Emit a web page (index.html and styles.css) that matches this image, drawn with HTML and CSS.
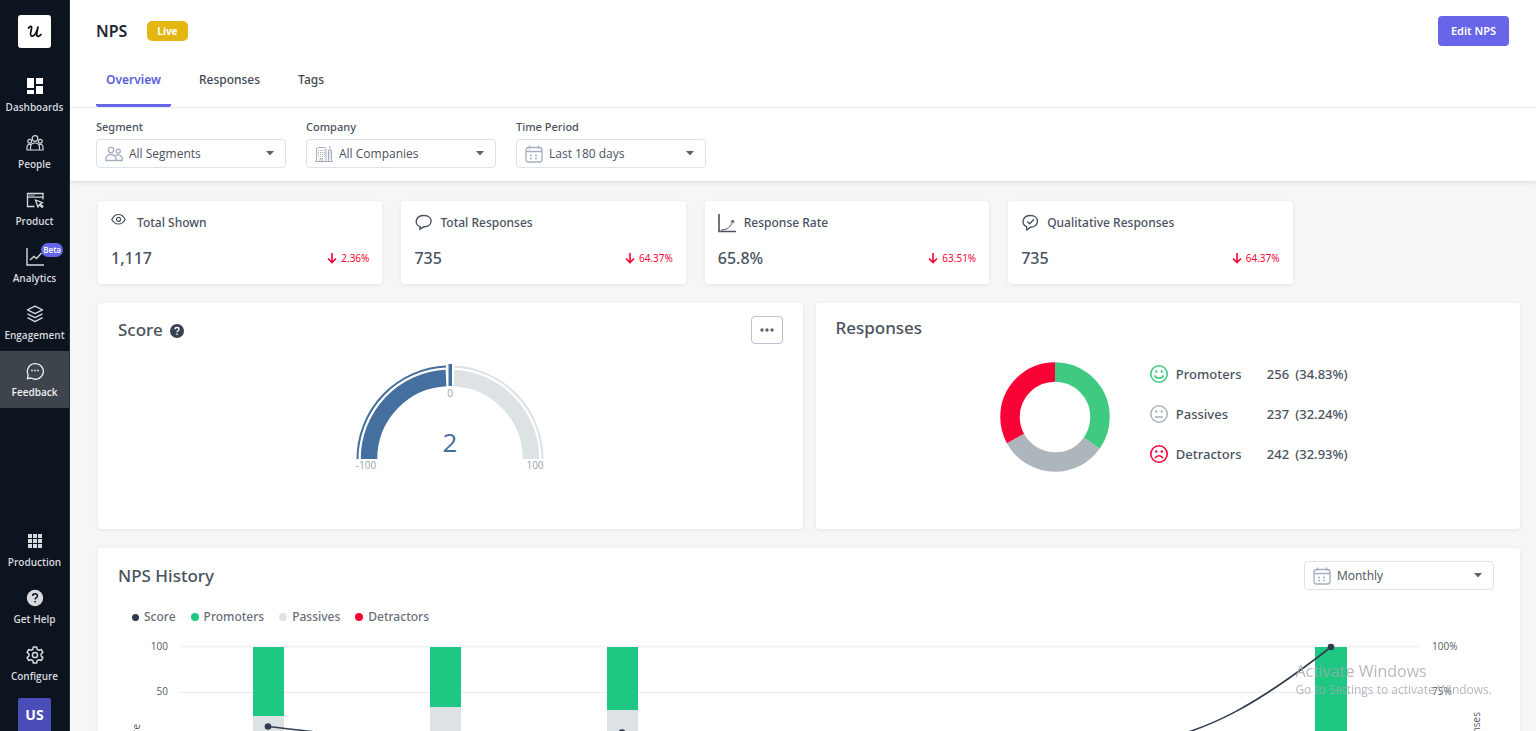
FILE: index.html
```
<!DOCTYPE html>
<html lang="en">
<head>
<meta charset="utf-8">
<title>NPS</title>
<meta name="viewport" content="width=device-width, initial-scale=1">
<link rel="stylesheet" href="styles.css">
</head>
<body>
<svg class="sprite" aria-hidden="true">
  <symbol id="calendar" viewBox="0 0 18 18"><g fill="none" stroke="currentColor" stroke-width="1.300"><rect x="1" y="2.500" width="16" height="14.500" rx="2.500"/><path d="M1 6.500h16M4.500 .5v3M13.500 .5v3"/><path d="M5 10.500h3M5 13.500h3M10 10.500h3M10 13.500h3" stroke-width="1.600" stroke-dasharray="2 1"/></g></symbol>
  <symbol id="caret" viewBox="0 0 8 5"><path d="M0 0h8L4 4.500z" fill="currentColor"/></symbol>
  <symbol id="down" viewBox="0 0 10 12"><path d="M5 1v9.500M1 6.500l4 4 4-4" fill="none" stroke="currentColor" stroke-width="1.600"/></symbol>
</svg>
<div class="app">
  <nav class="sidebar" aria-label="Main">
    <a class="logo" href="#" aria-label="Home"><svg viewBox="0 0 16 14" width="16" height="14"><path d="M1.500 3C3 1 5 .8 4.600 3L3.600 8c-.6 3.200 1.600 4 3.400 2.400C9 8.500 10.300 5 11.200 1.500 10.400 5 9.400 8.500 9.800 10.300c.4 1.700 2.400 1.300 4.200-.8" fill="none" stroke="#111" stroke-width="1.700" stroke-linecap="round"/></svg></a>
    <a class="nav-item" href="#"><svg viewBox="0 0 18 18"><path d="M1 1h7v10H1zM10 1h7v6h-7zM1 13h7v4H1zM10 9h7v8h-7z" fill="#fff"/></svg>Dashboards</a>
    <a class="nav-item" href="#"><svg viewBox="0 0 18 18"><g fill="none" stroke="currentColor" stroke-width="1.200"><circle cx="9" cy="4.500" r="2.800"/><circle cx="3.700" cy="7.200" r="1.900"/><circle cx="14.300" cy="7.200" r="1.900"/><path d="M4.500 16v-2.500c0-6 9-6 9 0V16zM4.500 16H1v-2.500c0-3 2.200-3.800 4.200-3.200M13.500 16H17v-2.500c0-3-2.200-3.800-4.200-3.200"/></g></svg>People</a>
    <a class="nav-item" href="#"><svg viewBox="0 0 18 18"><g fill="none" stroke="currentColor" stroke-width="1.300"><path d="M8.500 15.500H1.500v-13h15.500v6M1.500 6.200H17M3.500 4.400h1M5.500 4.400h1M7.500 4.400h1M9.500 9l2.400 7 1.400-2.200 2.600 2.600 1-1-2.600-2.600 2.200-1.200z"/></g></svg>Product</a>
    <a class="nav-item" href="#"><span class="badge">Beta</span><svg viewBox="0 0 18 18"><path d="M1 0v17h17" fill="none" stroke="currentColor" stroke-width="1.400"/><path d="M4 12l4-3.500 2.500 2L15.500 5" fill="none" stroke="currentColor" stroke-width="1.400"/></svg>Analytics</a>
    <a class="nav-item" href="#"><svg viewBox="0 0 18 18"><g fill="none" stroke="currentColor" stroke-width="1.300" stroke-linejoin="round"><path d="M9 1.200l7.500 3.700L9 8.600 1.500 4.900zM1.500 8.900L9 12.600l7.500-3.700M1.500 12.700L9 16.600l7.500-3.900"/></g></svg>Engagement</a>
    <a class="nav-item active" href="#" aria-current="page"><svg viewBox="0 0 18 18"><path d="M1.500 16.700l.6-4a8 7.800 0 1 1 3 3.300z" fill="none" stroke="currentColor" stroke-width="1.300"/><path d="M5.200 8.500h1.600M8.200 8.500h1.600M11.200 8.500h1.600" stroke="currentColor" stroke-width="1.500"/></svg>Feedback</a>
    <div class="nav-bottom">
      <a class="nav-item" href="#"><svg viewBox="0 0 18 18"><path d="M2 2h4v4H2zM7 2h4v4H7zM12 2h4v4h-4zM2 7h4v4H2zM7 7h4v4H7zM12 7h4v4h-4zM2 12h4v4H2zM7 12h4v4H7zM12 12h4v4h-4z" fill="currentColor"/><path d="M6.500 1v16M11.500 1v16M1 6.500h16M1 11.500h16" stroke="#0c1420"/></svg>Production</a>
      <a class="nav-item" href="#"><svg viewBox="0 0 18 18"><circle cx="9" cy="9" r="8.200" fill="currentColor"/><path d="M6.600 7c0-3 4.900-3 4.900 0 0 1.700-2.400 1.600-2.400 3.500M9.100 12v1.600" fill="none" stroke="#0c1420" stroke-width="1.500"/></svg>Get Help</a>
      <a class="nav-item" href="#"><svg viewBox="0 0 18 18"><g fill="none" stroke="currentColor" stroke-width="1.500" stroke-linejoin="round"><circle cx="9" cy="9" r="2.600"/><path d="M7.300 1h3.400l.5 2.300 1.700 1 2.300-.8 1.700 2.900-1.800 1.600v2l1.800 1.600-1.700 2.900-2.300-.8-1.700 1-.5 2.300H7.300l-.5-2.300-1.700-1-2.300.8-1.700-2.900L2.900 10V8L1.100 6.400l1.700-2.900 2.300.8 1.700-1z"/></g></svg>Configure</a>
      <button class="avatar" type="button">US</button>
    </div>
  </nav>

  <main class="main">
    <header class="top">
      <div class="title-row">
        <h1>NPS</h1><span class="live">Live</span>
        <button class="edit" type="button">Edit NPS</button>
      </div>
      <nav class="tabs" aria-label="NPS views">
        <a class="tab selected" href="#" aria-current="page">Overview</a>
        <a class="tab" href="#">Responses</a>
        <a class="tab" href="#">Tags</a>
      </nav>
      <div class="filters">
        <div class="field"><label for="segment">Segment</label>
          <div class="select"><svg class="lead" viewBox="0 0 18 18"><g fill="none" stroke="currentColor" stroke-width="1.300"><circle cx="6" cy="5" r="2.700"/><circle cx="13.300" cy="6.200" r="2"/><path d="M.8 15.500V14c0-6 10.200-6 10.200 0v1.500zM11 15.500h6.300V14c0-3.800-4.200-5-6.900-3.200"/></g></svg><select id="segment"><option>All Segments</option></select><svg class="caret"><use href="#caret"/></svg></div></div>
        <div class="field"><label for="company">Company</label>
          <div class="select"><svg class="lead" viewBox="0 0 18 18"><g fill="none" stroke="currentColor"><path d="M1.500 16.500V3.500l2-1h6l1.500 1v13M0 16.500h18M13.500 16.500V5.500h3v11M15 5.500V1M5 16.500v-3h2.500v3"/><path d="M3.500 5v7M5.500 5v7M7.500 5v7M9.300 5v7M15 7v8" stroke-dasharray="1 1"/></g></svg><select id="company"><option>All Companies</option></select><svg class="caret"><use href="#caret"/></svg></div></div>
        <div class="field"><label for="period">Time Period</label>
          <div class="select"><svg class="lead"><use href="#calendar"/></svg><select id="period"><option>Last 180 days</option></select><svg class="caret"><use href="#caret"/></svg></div></div>
      </div>
    </header>

    <div class="content">
      <section class="stats" aria-label="Summary">
        <article class="card stat"><h2><svg viewBox="0 0 18 20"><g fill="none" stroke="currentColor" stroke-width="1.200"><path d="M.8 6.500C4-.2 11-.2 14.200 6.500 11 12.500 4 12.500.8 6.500z"/><circle cx="7.500" cy="6.400" r="2"/></g></svg>Total Shown</h2><div class="row"><strong>1,117</strong><span class="delta"><svg><use href="#down"/></svg>2.36%</span></div></article>
        <article class="card stat"><h2><svg viewBox="0 0 18 20"><path d="M6.200 13.700C-.2 11.500 1.200 2.500 10 2.500c9.500 0 9.500 11 0 11.300L5.800 16.200z" fill="none" stroke="currentColor" stroke-width="1.400"/></svg>Total Responses</h2><div class="row"><strong>735</strong><span class="delta"><svg><use href="#down"/></svg>64.37%</span></div></article>
        <article class="card stat"><h2><svg viewBox="0 0 18 20"><path d="M1 1v17.500h17" fill="none" stroke="currentColor" stroke-width="1.600"/><path d="M3 17c6 0 10-3 12-9.500M12.500 9l2.700-1.800L16 10" fill="none" stroke="currentColor"/></svg>Response Rate</h2><div class="row"><strong>65.8%</strong><span class="delta"><svg><use href="#down"/></svg>63.51%</span></div></article>
        <article class="card stat"><h2><svg viewBox="0 0 18 20"><path d="M5.500 13.700C-.2 11.200 1.200 2.500 9.500 2.500c9.300 0 9.300 11.200 0 11.700L6 17z" fill="none" stroke="currentColor" stroke-width="1.400"/><path d="M6.300 8.500l2.400 2.200L13 6.200" fill="none" stroke="currentColor" stroke-width="1.400"/></svg>Qualitative Responses</h2><div class="row"><strong>735</strong><span class="delta"><svg><use href="#down"/></svg>64.37%</span></div></article>
      </section>

      <section class="pair">
        <article class="card panel">
          <div class="panel-head"><h2>Score <svg class="help" viewBox="0 0 14 14"><circle cx="7" cy="7" r="7" fill="#374151"/><path d="M5 5.300c0-2.400 4-2.400 4 0 0 1.400-2 1.400-2 3M7 9.500V11" fill="none" stroke="#fff" stroke-width="1.300"/></svg></h2>
            <button class="more" type="button" aria-label="More"><svg viewBox="0 0 14 4" width="14" height="4"><g fill="#5f636b"><circle cx="2" cy="2" r="1.700"/><circle cx="7" cy="2" r="1.700"/><circle cx="12" cy="2" r="1.700"/></g></svg></button></div>
          <svg class="gauge" viewBox="0 0 200 116" role="img" aria-label="Score 2">
            <g fill="none"><path d="M7.500 99A92.500 92.500 0 0 1 96 6.600" stroke="#456f9e" stroke-width="2"/><path d="M19 99A81 81 0 0 1 96 18.100" stroke="#456f9e" stroke-width="16.500"/><path d="M192.500 99A92.500 92.500 0 0 0 104 6.600" stroke="#dde2e4" stroke-width="2"/><path d="M181 99A81 81 0 0 0 104 18.100" stroke="#dde2e4" stroke-width="16.500"/></g>
            <path d="M98.500 4h3.500v22h-3.500z" fill="#456f9e"/>
            <g class="gauge-label"><text x="100" y="37">0</text><text x="16" y="109">-100</text><text x="185" y="109">100</text></g>
            <text class="gauge-value" x="100" y="92">2</text>
          </svg>
        </article>
        <article class="card panel">
          <h2>Responses</h2>
          <div class="breakdown">
            <svg class="donut" viewBox="0 0 110 110" role="img" aria-label="Share of responses"><g fill="none" stroke-width="19.500" transform="rotate(-90 55 55)"><circle cx="55" cy="55" r="45" pathLength="10000" stroke="#40c981" stroke-dasharray="3483 6517"/><circle cx="55" cy="55" r="45" pathLength="10000" stroke="#adb5bd" stroke-dasharray="3224 6776" stroke-dashoffset="-3483"/><circle cx="55" cy="55" r="45" pathLength="10000" stroke="#f90336" stroke-dasharray="3293 6707" stroke-dashoffset="-6707"/></g></svg>
            <table class="shares"><tbody>
              <tr><th scope="row"><svg viewBox="0 0 18 18" class="green"><g fill="none" stroke="currentColor" stroke-width="1.600"><circle cx="9" cy="9" r="8.200"/><path d="M4.500 10.500c2 3.500 7 3.500 9 0"/></g><circle cx="6.200" cy="6.500" r="1.200" fill="currentColor"/><circle cx="11.800" cy="6.500" r="1.200" fill="currentColor"/></svg>Promoters</th><td>256</td><td>(34.83%)</td></tr>
              <tr><th scope="row"><svg viewBox="0 0 18 18" class="gray"><g fill="none" stroke="currentColor" stroke-width="1.600"><circle cx="9" cy="9" r="8.200"/><path d="M5 12h8"/></g><circle cx="6.200" cy="6.500" r="1.200" fill="currentColor"/><circle cx="11.800" cy="6.500" r="1.200" fill="currentColor"/></svg>Passives</th><td>237</td><td>(32.24%)</td></tr>
              <tr><th scope="row"><svg viewBox="0 0 18 18" class="red"><g fill="none" stroke="currentColor" stroke-width="1.600"><circle cx="9" cy="9" r="8.200"/><path d="M5 13c2-3 6-3 8 0"/></g><circle cx="6.200" cy="6.500" r="1.200" fill="currentColor"/><circle cx="11.800" cy="6.500" r="1.200" fill="currentColor"/></svg>Detractors</th><td>242</td><td>(32.93%)</td></tr>
            </tbody></table>
          </div>
        </article>
      </section>

      <section class="card history">
        <div class="history-head"><h2>NPS History</h2>
          <div class="select"><svg class="lead"><use href="#calendar"/></svg><select id="interval" aria-label="Interval"><option>Monthly</option></select><svg class="caret"><use href="#caret"/></svg></div></div>
        <ul class="legend"><li><i class="dot score"></i>Score</li><li><i class="dot promoters"></i>Promoters</li><li><i class="dot passives"></i>Passives</li><li><i class="dot detractors"></i>Detractors</li></ul>
        <svg class="chart" viewBox="0 0 1422 230" role="img" aria-label="NPS history by month">
          <path d="M82 17.500h1240" stroke="#f3f3f3" stroke-width="2"/><path d="M82 63.500h1240M82 108.500h1240M82 154.500h1240M82 199.500h1240" stroke="#ececec"/>
          <path d="M155 18h31v69h-31zM332 18h31v60h-31zM509 18h31v63h-31zM1217 18h32v182h-32z" fill="#1fc882"/>
          <path d="M155 87h31v60h-31zM332 78h31v60h-31zM509 81h31v60h-31z" fill="#dde2e5"/>
          <path d="M155 147h31v53h-31zM332 138h31v62h-31zM509 141h31v59h-31z" fill="#f90336"/>
          <path d="M170 97.500C215 102.500 290 113 347 113S460 103 524 103C700 110 900 134 1050 113C1110 103 1160 75 1233 18" fill="none" stroke="#333f50" stroke-width="1.600"/>
          <g fill="#2f3a4b"><circle cx="170" cy="97.500" r="3.300"/><circle cx="347" cy="113" r="3.300"/><circle cx="524" cy="103.500" r="3.300"/><circle cx="1233" cy="18" r="3.300"/></g>
          <g class="axis"><text class="end" x="70" y="21">100</text><text class="end" x="70" y="66">50</text><text class="end" x="70" y="112">0</text><text class="end" x="70" y="158">-50</text><text class="end" x="70" y="203">-100</text><text x="1334" y="21">100%</text><text x="1334" y="66">75%</text><text x="1334" y="112">50%</text><text x="1334" y="158">25%</text><text x="1334" y="203">0%</text>
          <text class="end" transform="translate(42 95) rotate(-90)">Score</text><text class="end" transform="translate(1382 83) rotate(-90)">Responses</text></g>
        </svg>
      </section>
    </div>
  </main>
  <div class="watermark"><p>Activate Windows</p><small>Go to Settings to activate Windows.</small></div>
</div>
</body>
</html>
```
FILE: styles.css
```
* { box-sizing: border-box; }
body { margin: 0; font: 11px/20px "Noto Sans", "Open Sans", sans-serif; color: #4a5260; }
h1, h2, p, ul { margin: 0; padding: 0; }
a { color: inherit; text-decoration: none; }
button, select { font: inherit; color: inherit; }
svg { flex: none; }
.sprite { position: absolute; width: 0; height: 0; }

.app { display: flex; height: 100vh; overflow: hidden; }
.sidebar { flex: none; width: 70px; display: flex; flex-direction: column; background: #0c1420; color: #d8d9dc; border-right: 1px solid #252c38; font-family: "Open Sans", sans-serif; }
.logo { display: grid; place-items: center; width: 33px; height: 33px; margin: 15px auto 18px; background: #fff; border-radius: 3px; }
.nav-item { position: relative; display: flex; flex-direction: column; align-items: center; gap: 2px; height: 57px; padding-top: 11px; font-size: 10px; font-weight: 600; }
.nav-item > svg { width: 18px; height: 18px; }
.nav-item.active { background: #3d444b; color: #f1f1f1; }
.badge { position: absolute; top: 6px; right: 6px; padding: 0 2px; font-size: 8px; line-height: 14px; border-radius: 7px; background: #6366e6; color: #fff; }
.nav-bottom { margin-top: auto; }
.avatar { display: block; width: 33px; height: 33px; margin: 6px auto 0; padding: 0; border: 0; border-radius: 2px 2px 0 0; background: #4a4cb8; color: #fff; font-size: 14px; font-weight: 700; }

.main { flex: 1; min-width: 0; overflow-y: auto; scrollbar-width: none; background: #f6f6f6; }
.top { position: relative; background: #fff; box-shadow: 0 1px 5px #0002; }
.title-row { display: flex; align-items: center; padding: 16px 27px 0 26px; }
h1 { font-size: 16px; font-weight: 600; color: #1f2533; }
.live { margin-left: 20px; padding: 0 10px; border-radius: 5px; background: #e3b612; color: #fff; font-size: 10px; font-weight: 700; }
.edit { margin-left: auto; height: 30px; padding: 0 13px; border: 0; border-radius: 4px; background: #6865e8; color: #fff; font-weight: 600; }
.tabs { display: flex; gap: 18px; padding: 24px 26px 0; border-bottom: 1px solid #eaebed; color: #3f4856; font-size: 12px; font-weight: 500; }
.tab { padding: 0 10px 14px; border-bottom: 3px solid transparent; }
.tab.selected { color: #5a5fdb; border-color: #6865e8; border-radius: 2px; font-weight: 600; }
.filters { display: flex; gap: 20px; padding: 9px 26px 13px; }
.field { display: flex; flex-direction: column; gap: 2px; font-weight: 500; }
.select { display: flex; align-items: center; gap: 6px; width: 190px; height: 29px; padding: 0 11px 0 8px; border: 1px solid #dfe2e7; border-radius: 4px; background: #fff; }
.select select { flex: 1; min-width: 0; appearance: none; border: 0; padding: 0; background: none; font-family: "Open Sans", sans-serif; font-size: 12px; font-weight: 400; }
.lead { width: 18px; height: 18px; color: #a3aec0; }
.caret { width: 8px; height: 5px; color: #5b626d; }

.content { display: flex; flex-direction: column; gap: 19px; padding: 20px 16px 20px 28px; }
.card { background: #fff; border-radius: 4px; box-shadow: 0 1px 4px #00000012; }
.stats { display: flex; gap: 19px; }
.stat { width: 20%; padding: 12px 13px 16px; }
.stat h2 { display: flex; align-items: center; gap: 8px; font-size: 12px; line-height: 20px; font-weight: 500; }
.stat h2 svg { width: 18px; height: 20px; }
.row { display: flex; align-items: center; justify-content: space-between; margin-top: 15px; }
.row strong { font-size: 16px; font-weight: 500; }
.delta { display: flex; align-items: center; gap: 4px; color: #f90336; font-size: 10px; }
.delta svg { width: 10px; height: 12px; }
.pair { display: grid; grid-template-columns: 1fr 1fr; gap: 13px; }
.panel { padding: 13px 20px; height: 226px; display: flex; flex-direction: column; }
.panel h2, .history h2 { font-size: 17px; line-height: 24px; font-weight: 500; }
.panel-head { display: flex; align-items: center; justify-content: space-between; }
.help { width: 14px; height: 14px; vertical-align: -2px; margin-left: 3px; }
.more { display: grid; place-items: center; width: 32px; height: 28px; padding: 0; border: 1px solid #b8c2d0; border-radius: 4px; background: #fff; }
.gauge { width: 200px; height: 116px; align-self: center; margin-top: 16px; font-family: "Open Sans", sans-serif; }
.gauge-label { font-size: 10px; fill: #9aa1ab; text-anchor: middle; }
.gauge-value { font-size: 26px; fill: #456f9e; text-anchor: middle; }
.breakdown { display: flex; align-items: center; justify-content: center; gap: 40px; margin-top: 14px; padding-left: 18px; }
.donut { width: 110px; height: 110px; margin-top: 5px; }
.shares { border-collapse: collapse; font-size: 13px; font-weight: 500; }
.shares tr { height: 40px; }
.shares th { display: flex; align-items: center; gap: 8px; height: 40px; width: 117px; padding: 0; font-weight: 500; }
.shares th svg { width: 18px; height: 18px; }
.shares td { padding: 0 6px 0 0; }
.green { color: #40c981; }
.gray { color: #adb5bd; }
.red { color: #f90336; }

.history-head { display: flex; justify-content: space-between; align-items: center; padding: 13px 26px 0 20px; }
.legend { display: flex; gap: 15px; padding: 17px 34px 0; list-style: none; font-size: 12px; font-weight: 500; color: #6a707a; }
.legend li { display: flex; align-items: center; gap: 5px; }
.dot { width: 8px; height: 8px; border-radius: 50%; }
.score { width: 7px; height: 7px; background: #2f3a4b; }
.promoters { background: #1fc882; }
.passives { background: #dde2e5; }
.detractors { background: #f90336; }
.chart { display: block; width: 100%; margin-top: 2px; font-family: "Open Sans", sans-serif; }
.axis { font-size: 10px; fill: #555b66; }
.end { text-anchor: end; }
.watermark { position: fixed; right: 44px; bottom: 33px; pointer-events: none; color: #a3a7aecc; font-family: "Open Sans", sans-serif; }
.watermark p { font-size: 16px; line-height: 21px; }
.watermark small { display: block; font-size: 12px; line-height: 16px; }
```
